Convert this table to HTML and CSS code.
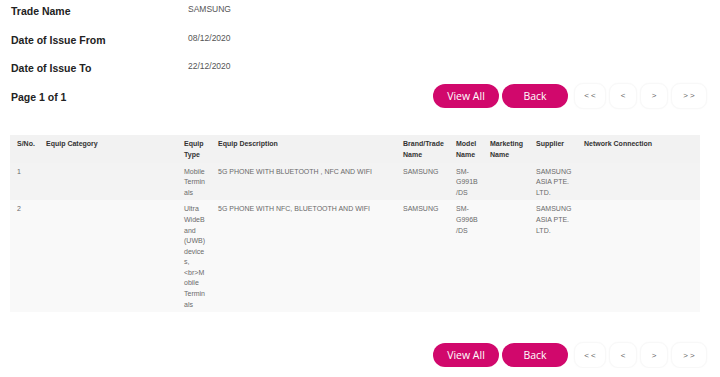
FILE: index.html
```html
<!DOCTYPE html>
<html>
<head>
<meta charset="utf-8">
<link rel="stylesheet" href="styles.css">
</head>
<body>
<div class="page">
  <div class="info">
    <div class="label">Trade Name</div><div class="value">SAMSUNG</div>
    <div class="label">Date of Issue From</div><div class="value">08/12/2020</div>
    <div class="label">Date of Issue To</div><div class="value">22/12/2020</div>
  </div>
  <div class="bar bar-top">
    <div class="label page-label">Page 1 of 1</div>
    <div class="nav">
      <button class="btn">View All</button>
      <button class="btn">Back</button>
      <button class="pg pg-first">&lt; &lt;</button>
      <button class="pg pg-prev">&lt;</button>
      <button class="pg pg-next">&gt;</button>
      <button class="pg pg-last">&gt; &gt;</button>
    </div>
  </div>
  <table class="grid">
    <colgroup>
      <col class="c-sno"><col class="c-cat"><col class="c-type"><col class="c-desc"><col class="c-brand"><col class="c-model"><col class="c-mkt"><col class="c-sup"><col class="c-net">
    </colgroup>
    <thead>
      <tr>
        <th class="sno">S/No.</th><th>Equip Category</th><th>Equip Type</th><th>Equip Description</th><th>Brand/Trade Name</th><th>Model Name</th><th>Marketing Name</th><th>Supplier</th><th>Network Connection</th>
      </tr>
    </thead>
    <tbody>
      <tr class="r1">
        <td class="sno">1</td><td></td><td>Mobile Terminals</td><td>5G PHONE WITH BLUETOOTH , NFC AND WIFI</td><td>SAMSUNG</td><td>SM-G991B/DS</td><td></td><td>SAMSUNG ASIA PTE. LTD.</td><td></td>
      </tr>
      <tr class="r2">
        <td class="sno">2</td><td></td><td>Ultra WideBand (UWB) devices, &lt;br&gt;Mobile Terminals</td><td>5G PHONE WITH NFC, BLUETOOTH AND WIFI</td><td>SAMSUNG</td><td>SM-G996B/DS</td><td></td><td>SAMSUNG ASIA PTE. LTD.</td><td></td>
      </tr>
    </tbody>
  </table>
  <div class="bar bar-bottom">
    <div class="nav">
      <button class="btn">View All</button>
      <button class="btn">Back</button>
      <button class="pg pg-first">&lt; &lt;</button>
      <button class="pg pg-prev">&lt;</button>
      <button class="pg pg-next">&gt;</button>
      <button class="pg pg-last">&gt; &gt;</button>
    </div>
  </div>
</div>
</body>
</html>
```
FILE: styles.css
```css
* { box-sizing: border-box; }
html, body { margin: 0; padding: 0; background: #fff; }
body { font-family: "Liberation Sans", Arial, sans-serif; color: #222; }

.page { padding: 4px 13px 0 10px; }

.info {
  display: grid;
  grid-template-columns: 177px auto;
  grid-auto-rows: 14px;
  row-gap: 14.7px;
  padding-left: 1px;
}
.label {
  font-weight: bold;
  font-size: 10.5px;
  line-height: 14px;
  color: #222;
}
.value {
  font-size: 8.5px;
  line-height: 10px;
  color: #555;
}

.bar { display: flex; align-items: center; }
.bar-top { margin-top: 7.6px; justify-content: space-between; padding-left: 1px; }
.page-label { padding-top: 2px; }
.bar-bottom { margin-top: 30px; justify-content: flex-end; }

.nav { display: flex; align-items: center; }
.btn {
  width: 66px;
  height: 24px;
  border: none;
  border-radius: 12px;
  background: #d1086c;
  color: #fff;
  font-family: "Open Sans", "Noto Sans", sans-serif;
  font-size: 10.5px;
  padding: 0;
  margin-right: 3px;
}
.pg {
  height: 26px;
  border: 1px solid #f8f8f8;
  border-radius: 9px;
  background: #fff;
  color: #666;
  font-family: "Liberation Sans", Arial, sans-serif;
  font-size: 8px;
  padding: 0;
  margin-left: 3px;
  box-shadow: 0 0 2px rgba(0,0,0,0.03);
}
.pg-first { width: 32px; margin-left: 3px; }
.pg-prev { width: 28px; }
.pg-next { width: 28px; }
.pg-last { width: 36px; }

.grid {
  margin-top: 26.4px;
  width: 690px;
  border-collapse: collapse;
  table-layout: fixed;
  font-size: 7px;
  line-height: 10.6px;
}
.c-sno { width: 29px; }
.c-cat { width: 138px; }
.c-type { width: 34px; }
.c-desc { width: 185px; }
.c-brand { width: 53px; }
.c-model { width: 34px; }
.c-mkt { width: 46px; }
.c-sup { width: 48px; }
.c-net { width: 123px; }

.grid th, .grid td {
  text-align: left;
  vertical-align: top;
  padding: 4px 5px 2px 7px;
  overflow-wrap: anywhere;
}
.grid .sno { padding-right: 0; white-space: nowrap; }
.grid th { font-weight: bold; color: #333; }
.grid td { color: #6a6a6a; }
.grid thead tr { background: #f2f2f2; }
.grid .r1 { background: #f3f3f3; }
.grid .r2 { background: #f9f9f9; }
```
